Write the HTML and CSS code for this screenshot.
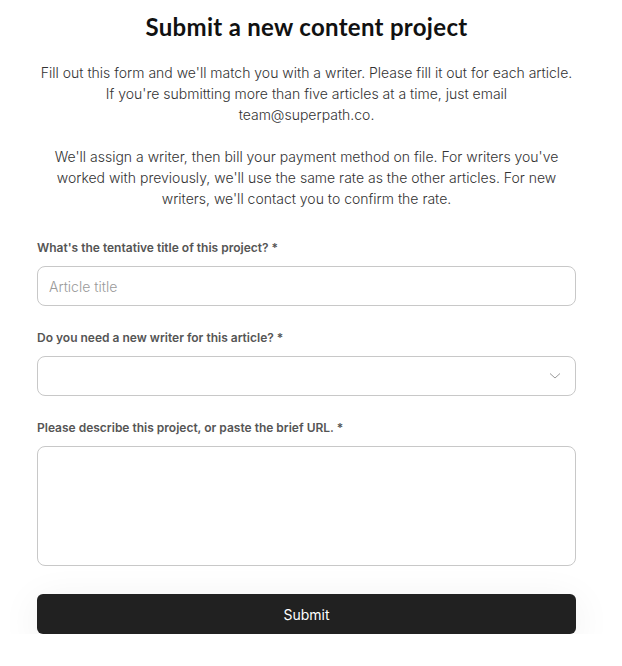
FILE: index.html
```
<!DOCTYPE html>
<html>
<head>
<meta charset="utf-8">
<link rel="stylesheet" href="styles.css">
</head>
<body>
<main class="page">
  <h1 class="title">Submit a new content project</h1>
  <div class="intro">
    <p>Fill out this form and we'll match you with a writer. Please fill it out for each article. If you're submitting more than five articles at a time, just email team@superpath.co.</p>
    <p>We'll assign a writer, then bill your payment method on file. For writers you've worked with previously, we'll use the same rate as the other articles. For new writers, we'll contact you to confirm the rate.</p>
  </div>
  <form class="form">
    <div class="field">
      <label class="label">What's the tentative title of this project? *</label>
      <input class="input" type="text" placeholder="Article title">
    </div>
    <div class="field">
      <label class="label">Do you need a new writer for this article? *</label>
      <div class="select">
        <svg class="chevron" width="12" height="8" viewBox="0 0 12 8"><path d="M1 1.5 L6 6 L11 1.5" fill="none" stroke="#9a9a9a" stroke-width="1"/></svg>
      </div>
    </div>
    <div class="field field-last">
      <label class="label">Please describe this project, or paste the brief URL. *</label>
      <div class="textarea"></div>
    </div>
    <button type="button" class="submit">Submit</button>
  </form>
</main>
</body>
</html>
```
FILE: styles.css
```
html, body {
  margin: 0;
  padding: 0;
  background: #ffffff;
}
body {
  font-family: Inter, "Liberation Sans", sans-serif;
  color: #333;
}
.page {
  width: 539px;
  margin-left: 37px;
  padding-top: 12px;
}
.title {
  font-family: Lato, "Noto Sans", sans-serif;
  font-weight: 700;
  font-size: 24px;
  line-height: 30px;
  letter-spacing: 0.3px;
  color: #111;
  text-align: center;
  margin: 0 0 20px 0;
}
.intro {
  text-align: center;
  font-size: 14px;
  font-weight: 300;
  line-height: 21px;
  color: #333;
}
.intro p {
  margin: 0 0 21px 0;
}
.intro p:last-child {
  margin-bottom: 0;
}
.form {
  margin-top: 31px;
}
.field {
  display: flex;
  flex-direction: column;
  margin-bottom: 24px;
}
.field-last {
  margin-bottom: 28px;
}
.label {
  font-size: 12px;
  font-weight: 600;
  line-height: 16px;
  color: #555;
  margin-bottom: 10px;
}
.input, .select, .textarea {
  box-sizing: border-box;
  width: 539px;
  height: 40px;
  border: 1px solid #c8c8c8;
  border-radius: 8px;
  background: #fff;
}
.input {
  font-family: Inter, "Liberation Sans", sans-serif;
  font-size: 14px;
  font-weight: 300;
  padding: 0 11px;
  color: #333;
  outline: none;
}
.input::placeholder {
  color: #9a9a9a;
}
.select {
  display: flex;
  align-items: center;
  justify-content: flex-end;
  padding-right: 14px;
}
.textarea {
  height: 120px;
}
.submit {
  display: block;
  width: 539px;
  height: 40px;
  margin: 0;
  border: none;
  border-radius: 6px;
  background: #212121;
  color: #fff;
  font-family: Inter, "Liberation Sans", sans-serif;
  font-size: 14px;
  font-weight: 400;
  box-shadow: 0 8px 40px rgba(0, 0, 0, 0.07);
}
```
